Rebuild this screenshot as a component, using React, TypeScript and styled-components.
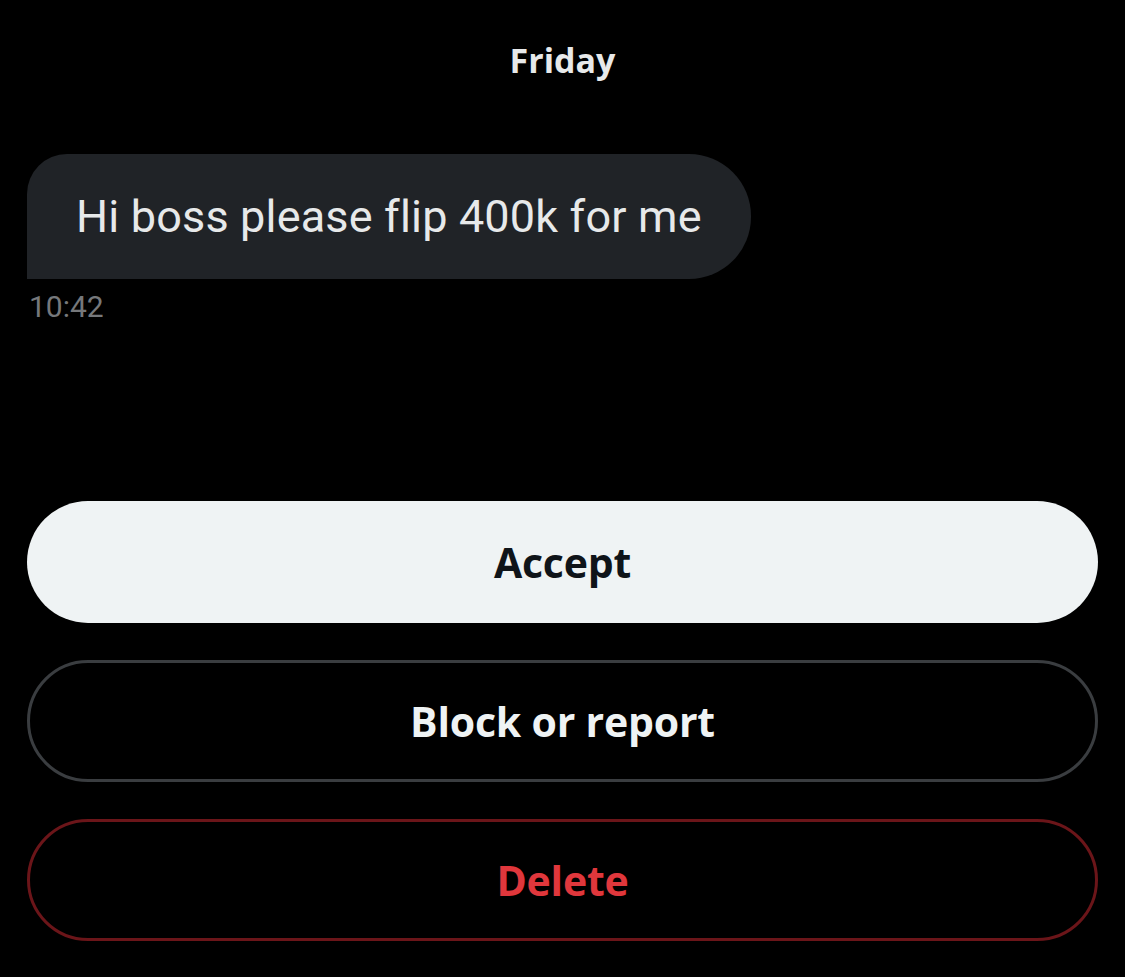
import styled, { createGlobalStyle } from "styled-components";

const GlobalStyle = createGlobalStyle`
  html, body {
    margin: 0;
    padding: 0;
    background: #000;
  }
  body {
    font-family: "Open Sans", "Liberation Sans", sans-serif;
  }
`;

type Variant = "primary" | "outline" | "danger";

const actions: { label: string; variant: Variant }[] = [
  { label: "Accept", variant: "primary" },
  { label: "Block or report", variant: "outline" },
  { label: "Delete", variant: "danger" },
];

const App = () => {
  return (
    <>
      <GlobalStyle />
      <Screen>
        <DayLabel>Friday</DayLabel>
        <MessageGroup>
          <Bubble>Hi boss please flip 400k for me</Bubble>
          <Time>10:42</Time>
        </MessageGroup>
        <Actions>
          {actions.map((a) => (
            <ActionButton key={a.label} $variant={a.variant}>
              {a.label}
            </ActionButton>
          ))}
        </Actions>
      </Screen>
    </>
  );
};

export default App;

const Screen = styled.div`
  width: 1125px;
  height: 977px;
  background: #000;
  display: flex;
  flex-direction: column;
  box-sizing: border-box;
  padding: 36px 27px 0 27px;
`;

const DayLabel = styled.div`
  text-align: center;
  color: #e7e9ea;
  font-size: 34px;
  font-weight: 700;
  line-height: 48px;
`;

const MessageGroup = styled.div`
  display: flex;
  flex-direction: column;
  align-items: flex-start;
  margin-top: 70px;
`;

const Bubble = styled.div`
  background: #202327;
  color: #e7e9ea;
  font-family: Roboto, "Liberation Sans", sans-serif;
  font-size: 45px;
  letter-spacing: 0.17px;
  line-height: 125px;
  height: 125px;
  padding: 0 49px;
  border-radius: 40px 62px 62px 0;
`;

const Time = styled.div`
  margin-top: 10px;
  margin-left: 2px;
  color: #76787b;
  font-family: Roboto, "Liberation Sans", sans-serif;
  font-size: 30px;
  line-height: 36px;
`;

const Actions = styled.div`
  display: flex;
  flex-direction: column;
  gap: 37px;
  margin-top: 176px;
`;

const ActionButton = styled.div<{ $variant: Variant }>`
  height: 122px;
  box-sizing: border-box;
  border-radius: 61px;
  display: flex;
  align-items: center;
  justify-content: center;
  font-size: 41px;
  font-weight: 700;
  letter-spacing: -0.2px;
  background: ${(p) => (p.$variant === "primary" ? "#eff3f4" : "#000")};
  color: ${(p) =>
    p.$variant === "primary"
      ? "#0f1419"
      : p.$variant === "danger"
      ? "#e0373c"
      : "#eff3f4"};
  border: ${(p) =>
    p.$variant === "primary"
      ? "none"
      : p.$variant === "danger"
      ? "3px solid #6b1519"
      : "3px solid #3a3d40"};
`;
